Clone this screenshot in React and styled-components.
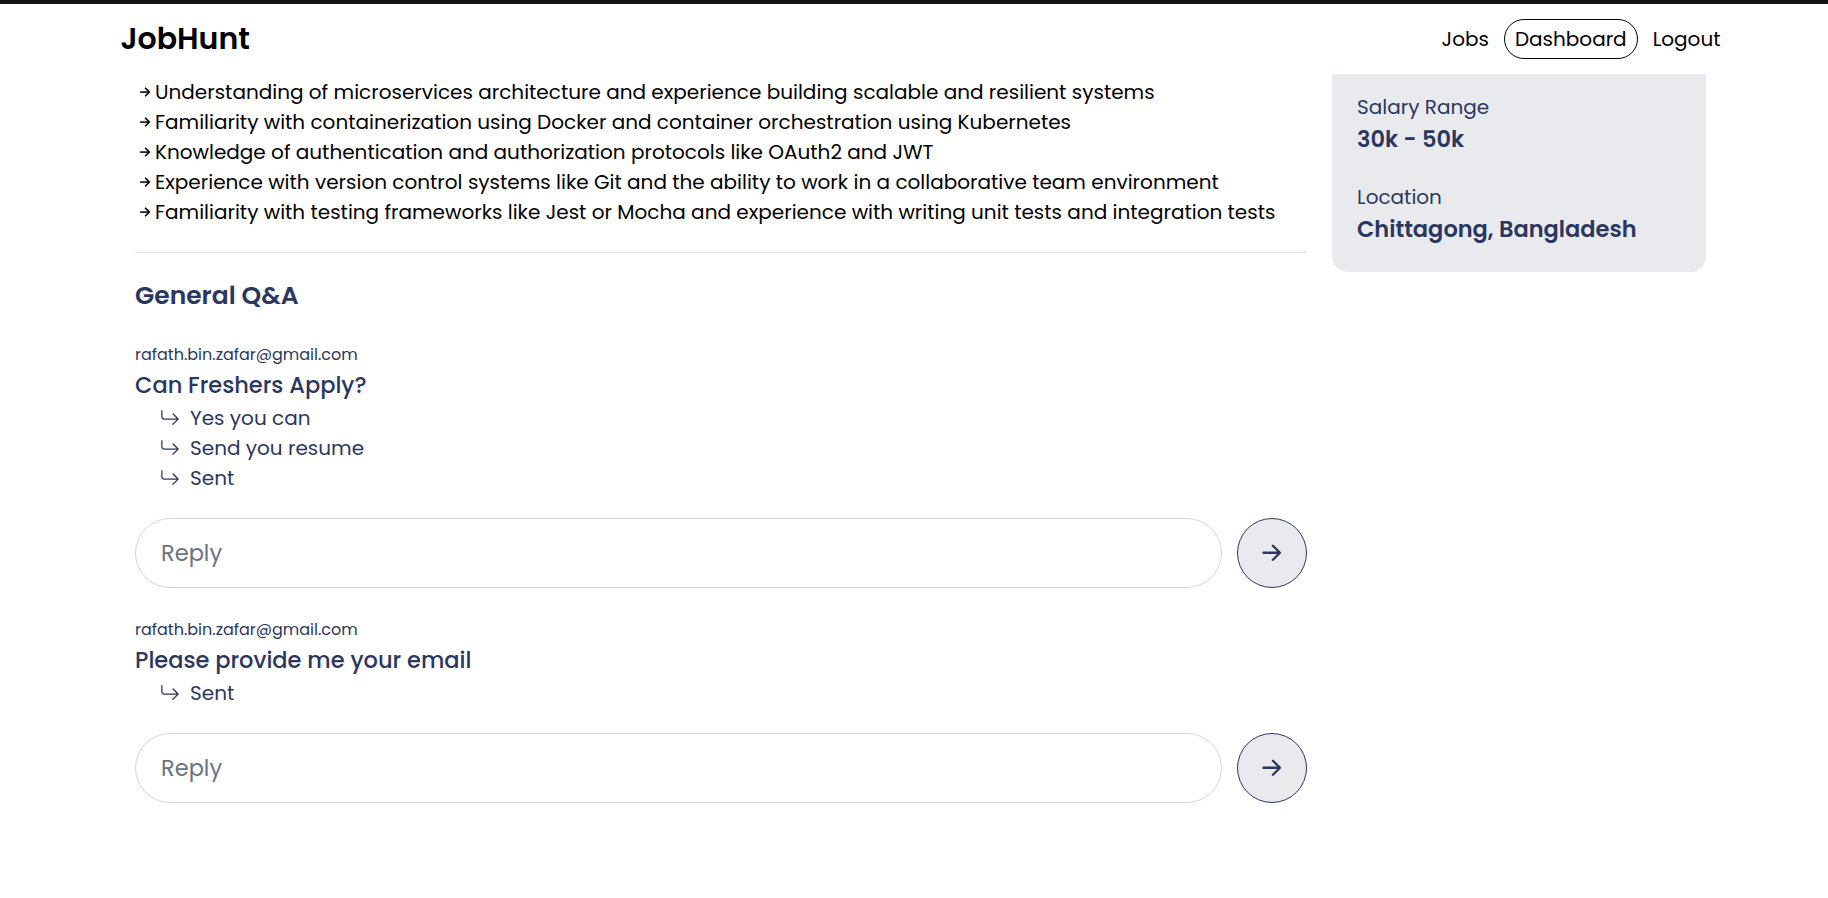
import React from 'react';
import styled, { createGlobalStyle } from 'styled-components';
import { BsArrowRightShort, BsArrowReturnRight } from 'react-icons/bs';

const GlobalStyle = createGlobalStyle`
  *, *::before, *::after { box-sizing: border-box; }
  body {
    margin: 0;
    background: #fff;
    color: #000;
    font-family: Poppins, Inter, 'Liberation Sans', sans-serif;
    font-size: 20px;
    line-height: 30px;
  }
  h1, h2, h3, p, ul { margin: 0; padding: 0; font-weight: inherit; }
`;

const Page = styled.div`
  min-height: 898px;
  border-top: 4px solid #141615;
`;

const Header = styled.header`
  height: 70px;
  padding: 0 107.5px 0 120.5px;
  display: flex;
  align-items: center;
  justify-content: space-between;
`;

const Logo = styled.h1`
  padding-bottom: 2px;
  font-size: 30px;
  font-weight: 600;
  line-height: 45px;
`;

const Nav = styled.nav`
  display: flex;
  align-items: center;
  gap: 15px;
`;

const NavLink = styled.a`
  color: #000;
  white-space: nowrap;
`;

const NavPill = styled(NavLink)`
  height: 40px;
  padding: 0 10px;
  display: flex;
  align-items: center;
  border: 1px solid #000;
  border-radius: 20px;
`;

const Content = styled.main`
  padding: 0 122px 0 135px;
  display: grid;
  grid-template-columns: 1172px 374px;
  gap: 25px;
  align-items: start;
`;

const Details = styled.section`
  padding-top: 3px;
`;

const Requirements = styled.ul`
  list-style: none;
  padding-bottom: 25px;
  border-bottom: 1px solid #e2e3e8;
`;

const Requirement = styled.li`
  height: 30px;
  display: flex;
  align-items: center;
  white-space: nowrap;

  svg {
    flex: none;
    stroke-width: 0.3;
  }
`;

const SectionTitle = styled.h2`
  margin: 24px 0 29px;
  color: #2b3760;
  font-size: 25px;
  font-weight: 600;
  line-height: 37px;
`;

const Thread = styled.article`
  color: #2b3760;

  & + & { margin-top: 30px; }
`;

const Author = styled.p`
  margin-bottom: 1px;
  font-size: 16px;
  line-height: 24px;
`;

const Question = styled.h3`
  margin-bottom: 1px;
  font-size: 22.5px;
  font-weight: 500;
  line-height: 34px;
`;

const Answer = styled.p`
  height: 30px;
  padding-left: 25px;
  display: flex;
  align-items: center;
  gap: 10px;
`;

const ReplyForm = styled.form`
  margin-top: 25px;
  display: flex;
  gap: 15px;
`;

const ReplyInput = styled.input`
  flex: 1;
  min-width: 0;
  height: 70px;
  padding: 0 25px;
  border: 1px solid #d4d4dc;
  border-radius: 35px;
  background: #fff;
  color: #2b3760;
  font: inherit;
  font-size: 22.5px;
  outline: none;

  &::placeholder { color: #6c757d; opacity: 1; }
`;

const SendButton = styled.button`
  width: 70px;
  height: 70px;
  padding: 0;
  display: flex;
  align-items: center;
  justify-content: center;
  border: 1px solid #2b3760;
  border-radius: 50%;
  background: #e9eaee;
  color: #2b3760;
`;

const Summary = styled.aside`
  padding: 18px 25px 26px;
  display: grid;
  gap: 26px;
  border-radius: 0 0 16px 16px;
  background: #e9eaee;
  color: #2b3760;
`;

const FactLabel = styled.p`
  font-weight: 400;
`;

const FactValue = styled.p`
  font-size: 22.5px;
  font-weight: 600;
  line-height: 34px;
`;

const requirements = [
  'Understanding of microservices architecture and experience building scalable and resilient systems',
  'Familiarity with containerization using Docker and container orchestration using Kubernetes',
  'Knowledge of authentication and authorization protocols like OAuth2 and JWT',
  'Experience with version control systems like Git and the ability to work in a collaborative team environment',
  'Familiarity with testing frameworks like Jest or Mocha and experience with writing unit tests and integration tests',
];

const threads = [
  {
    author: 'rafath.bin.zafar@gmail.com',
    question: 'Can Freshers Apply?',
    answers: ['Yes you can', 'Send you resume', 'Sent'],
  },
  {
    author: 'rafath.bin.zafar@gmail.com',
    question: 'Please provide me your email',
    answers: ['Sent'],
  },
];

const facts = [
  { label: 'Salary Range', value: '30k - 50k' },
  { label: 'Location', value: 'Chittagong, Bangladesh' },
];

export default function App() {
  return (
    <>
      <GlobalStyle />
      <Page>
        <Header>
          <Logo>JobHunt</Logo>
          <Nav>
            <NavLink>Jobs</NavLink>
            <NavPill>Dashboard</NavPill>
            <NavLink>Logout</NavLink>
          </Nav>
        </Header>
        <Content>
          <Details>
            <Requirements>
              {requirements.map((text) => (
                <Requirement key={text}>
                  <BsArrowRightShort size={20} />
                  {text}
                </Requirement>
              ))}
            </Requirements>
            <SectionTitle>General Q&amp;A</SectionTitle>
            {threads.map(({ author, question, answers }) => (
              <Thread key={question}>
                <Author>{author}</Author>
                <Question>{question}</Question>
                {answers.map((text) => (
                  <Answer key={text}>
                    <BsArrowReturnRight size={20} />
                    {text}
                  </Answer>
                ))}
                <ReplyForm>
                  <ReplyInput placeholder="Reply" />
                  <SendButton type="button" aria-label="Send reply">
                    <BsArrowRightShort size={37.5} />
                  </SendButton>
                </ReplyForm>
              </Thread>
            ))}
          </Details>
          <Summary>
            {facts.map((fact) => (
              <div key={fact.label}>
                <FactLabel>{fact.label}</FactLabel>
                <FactValue>{fact.value}</FactValue>
              </div>
            ))}
          </Summary>
        </Content>
      </Page>
    </>
  );
}
